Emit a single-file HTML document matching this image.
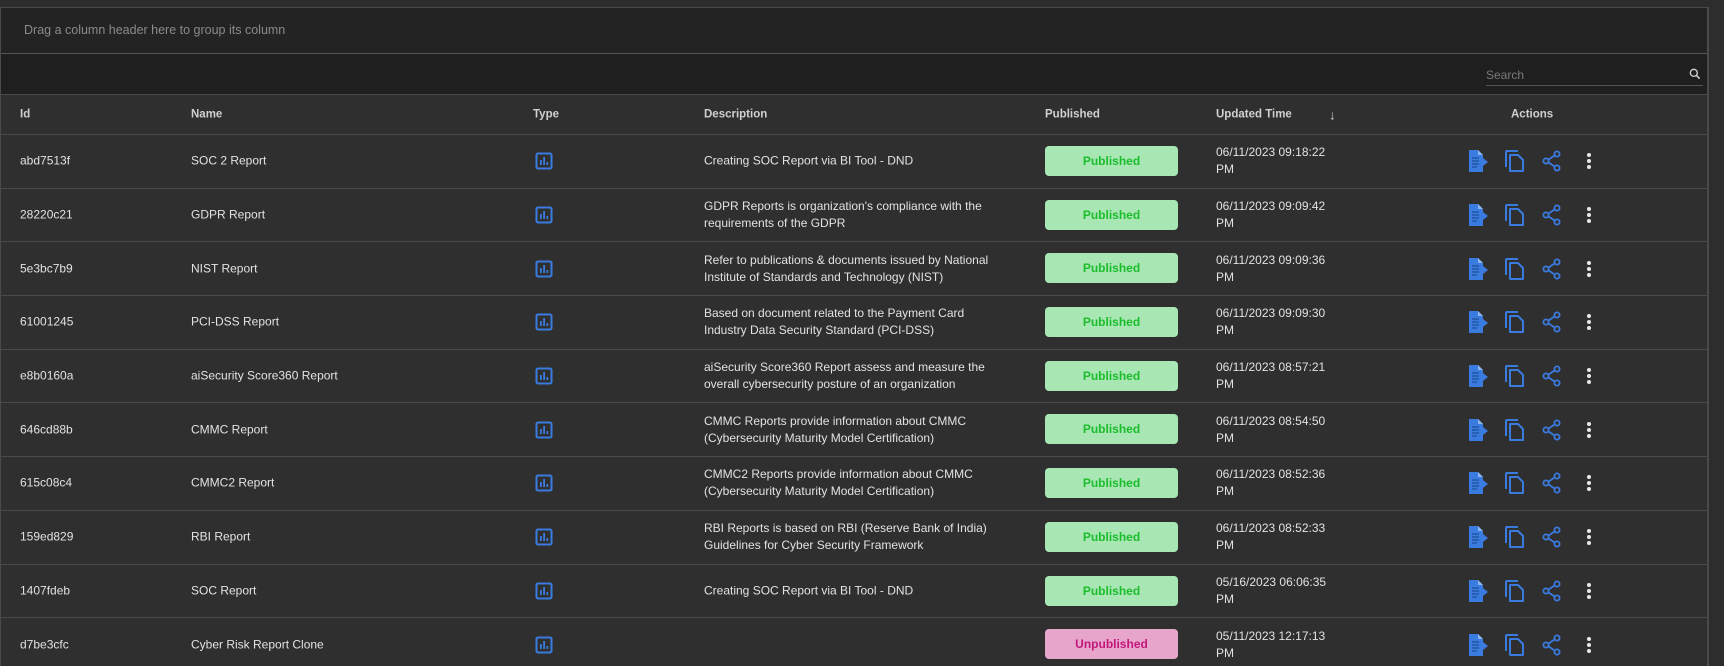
<!DOCTYPE html>
<html style="width:1724px;height:666px;overflow:hidden"><head><meta charset="utf-8"><style>
*{box-sizing:border-box;margin:0;padding:0}
body{width:1724px;height:666px;overflow:hidden;background:#2d2d2d;font-family:"Liberation Sans",sans-serif;color:#e2e2e2;font-size:12px;position:relative}
.wrap{position:absolute;left:0;top:7px;width:1709px;height:680px;border:1px solid #4a4a4a;border-right:2px solid #4a4a4a;background:#2f2f2f;overflow:hidden}
.group{height:46px;background:#232323;border-bottom:1px solid #555;color:#8a8a8a;font-size:12.5px;padding:15px 0 0 23px}
.tool{height:41px;background:#1f1f1f;border-bottom:1px solid #4a4a4a;position:relative}
.search{position:absolute;left:1485px;top:10px;width:217px;height:22px;border-bottom:1px solid #555;color:#7a7a7a;font-size:12px;padding-top:4px}
.search svg{position:absolute;right:1px;top:3px}
.row{position:relative;height:53.7px;border-bottom:1px solid #4a4a4a}
.head{height:40px;font-weight:bold;color:#d0d0d0;font-size:11.5px}
.c{position:absolute;top:50%;transform:translateY(-50%);line-height:17px}
.badge{position:absolute;left:1044px;top:11px;width:133px;height:30px;border-radius:4px;background:#a8e6b4;color:#1cbd2c;font-weight:bold;text-align:center;line-height:30px;font-size:12px}
.un{background:#e8a5cc;color:#c2187a}
.ic{position:absolute;top:50%;transform:translateY(-50%)}
</style></head><body>
<div class="wrap">
<div class="group">Drag a column header here to group its column</div>
<div class="tool"><div class="search">Search<svg width="14" height="14" viewBox="0 0 24 24"><circle cx="10" cy="10" r="6" fill="none" stroke="#cfcfcf" stroke-width="2.4"/><path d="M14.5 14.5L20 20" stroke="#cfcfcf" stroke-width="2.6"/></svg></div></div>
<div class="row head">
<div class="c" style="left:19px">Id</div>
<div class="c" style="left:190px">Name</div>
<div class="c" style="left:532px">Type</div>
<div class="c" style="left:703px">Description</div>
<div class="c" style="left:1044px">Published</div>
<div class="c" style="left:1215px">Updated Time</div>
<div class="c" style="left:1328px;font-weight:normal;font-size:13px">&#8595;</div>
<div class="c" style="left:1510px">Actions</div>
</div>
<div id="rows"></div>
</div>
<script>
var d=[["abd7513f","SOC 2 Report","Creating SOC Report via BI Tool - DND","06/11/2023 09:18:22"],
["28220c21","GDPR Report","GDPR Reports is organization's compliance with the<br>requirements of the GDPR","06/11/2023 09:09:42"],
["5e3bc7b9","NIST Report","Refer to publications &amp; documents issued by National<br>Institute of Standards and Technology (NIST)","06/11/2023 09:09:36"],
["61001245","PCI-DSS Report","Based on document related to the Payment Card<br>Industry Data Security Standard (PCI-DSS)","06/11/2023 09:09:30"],
["e8b0160a","aiSecurity Score360 Report","aiSecurity Score360 Report assess and measure the<br>overall cybersecurity posture of an organization","06/11/2023 08:57:21"],
["646cd88b","CMMC Report","CMMC Reports provide information about CMMC<br>(Cybersecurity Maturity Model Certification)","06/11/2023 08:54:50"],
["615c08c4","CMMC2 Report","CMMC2 Reports provide information about CMMC<br>(Cybersecurity Maturity Model Certification)","06/11/2023 08:52:36"],
["159ed829","RBI Report","RBI Reports is based on RBI (Reserve Bank of India)<br>Guidelines for Cyber Security Framework","06/11/2023 08:52:33"],
["1407fdeb","SOC Report","Creating SOC Report via BI Tool - DND","05/16/2023 06:06:35"],
["d7be3cfc","Cyber Risk Report Clone","","05/11/2023 12:17:13"]];
var B="#3a7be0",h="";
d.forEach(function(r,i){
h+='<div class="row"><div class="c" style="left:19px">'+r[0]+'</div><div class="c" style="left:190px">'+r[1]+'</div>'+
'<svg class="ic" style="left:534px" width="18" height="18" viewBox="0 0 18 18"><rect x="1.5" y="1.5" width="15" height="15" rx="1.5" fill="none" stroke="'+B+'" stroke-width="2"/><rect x="5" y="8" width="1.8" height="5" fill="'+B+'"/><rect x="8.2" y="5" width="1.8" height="8" fill="'+B+'"/><rect x="11.4" y="10" width="1.8" height="3" fill="'+B+'"/></svg>'+
'<div class="c" style="left:703px">'+r[2]+'</div><div class="badge'+(i==9?' un':'')+'">'+(i==9?'Unpublished':'Published')+'</div>'+
'<div class="c" style="left:1215px">'+r[3]+'<br>PM</div>'+
'<svg class="ic" style="left:1466px" width="24" height="24" viewBox="0 0 24 24"><path d="M2 1h9l5 5v17H2z" fill="'+B+'"/><path d="M11 1v5h5" fill="#8fb5ee"/><path d="M5 9h7M5 12h7M5 15h7M5 18h5" stroke="#1f4f9a" stroke-width="1.2"/><path d="M16 9l5 4-5 4z" fill="'+B+'"/></svg>'+
'<svg class="ic" style="left:1503px" width="22" height="24" viewBox="0 0 22 24"><path d="M2 18V3a1 1 0 0 1 1-1h11" fill="none" stroke="'+B+'" stroke-width="2"/><path d="M6 6h8l5 5v11H6z" fill="none" stroke="'+B+'" stroke-width="2" stroke-linejoin="round"/></svg>'+
'<svg class="ic" style="left:1541px" width="20" height="22" viewBox="0 0 20 22"><circle cx="15" cy="4" r="2.6" fill="none" stroke="'+B+'" stroke-width="1.8"/><circle cx="4" cy="11" r="2.6" fill="none" stroke="'+B+'" stroke-width="1.8"/><circle cx="15" cy="18" r="2.6" fill="none" stroke="'+B+'" stroke-width="1.8"/><path d="M6.3 9.7l6.4-4.3M6.3 12.3l6.4 4.3" stroke="'+B+'" stroke-width="1.8"/></svg>'+
'<svg class="ic" style="left:1585px" width="6" height="18" viewBox="0 0 6 18"><circle cx="3" cy="3" r="2" fill="#e8e8e8"/><circle cx="3" cy="9" r="2" fill="#e8e8e8"/><circle cx="3" cy="15" r="2" fill="#e8e8e8"/></svg></div>';
});
document.getElementById('rows').innerHTML=h;
</script>
</body></html>
